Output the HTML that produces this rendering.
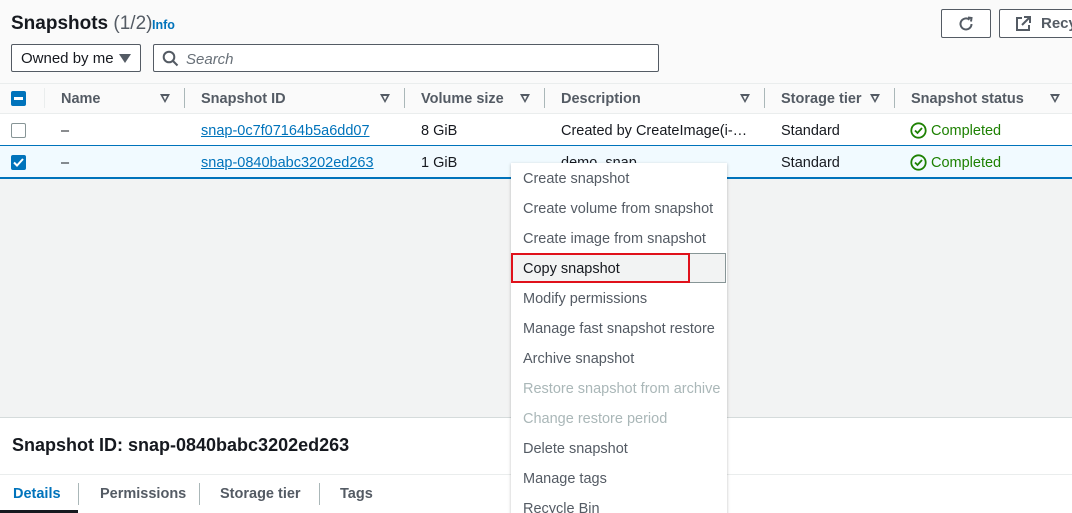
<!DOCTYPE html>
<html style="overflow:hidden;height:513px"><head><style>
*{box-sizing:border-box;margin:0;padding:0}
body{width:1072px;height:513px;overflow:hidden;background:#f2f3f3;font-family:"Liberation Sans",sans-serif;color:#16191f;position:relative;font-size:14.5px}
.abs{position:absolute}
.top{left:0;top:0;width:1072px;height:83px;background:#fafafa}
.thead{left:0;top:83px;width:1072px;height:31px;background:#fafafa;border-top:1px solid #eaeded;border-bottom:1px solid #eaeded}
.th{position:absolute;top:91px;font-weight:bold;color:#545b64;font-size:14.5px}
.tri{position:absolute;top:94px;width:0;height:0;border-left:5px solid transparent;border-right:5px solid transparent;border-top:9px solid #545b64}
.tri:after{content:"";position:absolute;left:-2px;top:-7px;border-left:2px solid transparent;border-right:2px solid transparent;border-top:4px solid #fafafa}
.sep{position:absolute;top:88px;width:1px;height:20px;background:#aab7b8}
.row{left:0;width:1072px;height:32px;background:#fff}
.td{position:absolute;font-size:14.5px}
a{color:#0073bb;text-decoration:underline}
.green{color:#1d8102}
.menu{left:511px;top:163px;width:216px;height:360px;background:#fff;box-shadow:0 1px 3px rgba(0,0,0,.25)}
.mi{position:absolute;left:12px;font-size:14.5px;color:#16191f;white-space:nowrap}
.dis{color:#aab7b8}
.btn{position:absolute;top:9px;height:29px;border:1px solid #545b64;background:#fff;border-radius:2px}
</style></head><body>
<div class="abs top"></div>
<div class="abs" style="left:11px;top:13px;font-size:19px;font-weight:bold">Snapshots <span style="font-weight:normal;color:#545b64">(1/2)</span></div>
<div class="abs" style="left:152px;top:18px;font-size:12.5px;font-weight:bold;color:#0073bb">Info</div>
<div class="btn" style="left:941px;width:50px"><svg class="abs" style="left:15px;top:5px" width="18" height="18" viewBox="0 0 18 18"><path d="M14.5 9a5.5 5.5 0 1 1-2-4.3" fill="none" stroke="#545b64" stroke-width="2"/><path d="M11 2.5l3.5 0.5-0.5 3.5" fill="none" stroke="#545b64" stroke-width="2"/></svg></div>
<div class="btn" style="left:999px;width:90px"><svg class="abs" style="left:15px;top:6px" width="16" height="16" viewBox="0 0 16 16"><path d="M7 2H2v12h12V9" fill="none" stroke="#545b64" stroke-width="2"/><path d="M9 1h6v6M15 1L7 9" fill="none" stroke="#545b64" stroke-width="2"/></svg><span class="abs" style="left:41px;top:5px;font-weight:bold;color:#545b64;font-size:15px">Recy</span></div>
<div class="abs" style="left:11px;top:44px;width:130px;height:28px;border:1px solid #545b64;background:#fff;border-radius:2px"><span class="abs" style="left:9px;top:5px;font-size:15px">Owned by me</span><span class="abs" style="left:107px;top:9px;border-left:6px solid transparent;border-right:6px solid transparent;border-top:9px solid #545b64"></span></div>
<div class="abs" style="left:153px;top:44px;width:506px;height:28px;border:1px solid #545b64;background:#fff;border-radius:2px"><svg class="abs" style="left:8px;top:5px" width="17" height="17" viewBox="0 0 17 17"><circle cx="7" cy="7" r="5.3" fill="none" stroke="#545b64" stroke-width="2"/><path d="M11 11l4.5 4.5" stroke="#545b64" stroke-width="2"/></svg><span class="abs" style="left:32px;top:6px;font-style:italic;color:#687078;font-size:15px">Search</span></div>
<div class="abs thead"></div>
<div class="abs" style="left:11px;top:91px;width:15px;height:15px;background:#0073bb;border-radius:2px"><div style="position:absolute;left:3px;top:6px;width:9px;height:2.5px;background:#fff"></div></div>
<div class="sep" style="left:44px;background:#eaeded"></div>
<div class="th" style="left:61px">Name</div><div class="tri" style="left:160px"></div><div class="sep" style="left:184px"></div>
<div class="th" style="left:201px">Snapshot ID</div><div class="tri" style="left:380px"></div><div class="sep" style="left:404px"></div>
<div class="th" style="left:421px">Volume size</div><div class="tri" style="left:520px"></div><div class="sep" style="left:544px"></div>
<div class="th" style="left:561px">Description</div><div class="tri" style="left:740px"></div><div class="sep" style="left:764px"></div>
<div class="th" style="left:781px">Storage tier</div><div class="tri" style="left:870px"></div><div class="sep" style="left:894px"></div>
<div class="th" style="left:911px">Snapshot status</div><div class="tri" style="left:1050px"></div>
<div class="abs row" style="top:114px;border-bottom:1px solid #0073bb"></div>
<div class="abs row" style="top:146px;background:#f1faff;height:33px;border-bottom:2px solid #0073bb"></div>
<div class="abs" style="left:11px;top:123px;width:15px;height:15px;border:1.5px solid #879596;border-radius:2px;background:#fff"></div>
<div class="td" style="left:61px;top:123px">–</div>
<div class="td" style="left:201px;top:123px"><a>snap-0c7f07164b5a6dd07</a></div>
<div class="td" style="left:421px;top:123px">8 GiB</div>
<div class="td" style="left:561px;top:123px">Created by CreateImage(i-…</div>
<div class="td" style="left:781px;top:123px">Standard</div>
<svg class="abs" style="left:910px;top:122px" width="17" height="17" viewBox="0 0 17 17"><circle cx="8.5" cy="8.5" r="7.2" fill="none" stroke="#1d8102" stroke-width="1.8"/><path d="M5 8.5l2.5 2.5 4.5-5" fill="none" stroke="#1d8102" stroke-width="1.8"/></svg>
<div class="td green" style="left:931px;top:123px">Completed</div>
<div class="abs" style="left:11px;top:155px;width:15px;height:15px;background:#0073bb;border-radius:2px"><svg width="15" height="15" viewBox="0 0 15 15"><path d="M3 7.5l3 3 6-6.5" fill="none" stroke="#fff" stroke-width="2"/></svg></div>
<div class="td" style="left:61px;top:155px">–</div>
<div class="td" style="left:201px;top:155px"><a>snap-0840babc3202ed263</a></div>
<div class="td" style="left:421px;top:155px">1 GiB</div>
<div class="td" style="left:561px;top:155px">demo_snap</div>
<div class="td" style="left:781px;top:155px">Standard</div>
<svg class="abs" style="left:910px;top:154px" width="17" height="17" viewBox="0 0 17 17"><circle cx="8.5" cy="8.5" r="7.2" fill="none" stroke="#1d8102" stroke-width="1.8"/><path d="M5 8.5l2.5 2.5 4.5-5" fill="none" stroke="#1d8102" stroke-width="1.8"/></svg>
<div class="td green" style="left:931px;top:155px">Completed</div>
<div class="abs" style="left:0;top:417px;width:1072px;height:96px;background:#fff;border-top:1px solid #d5dbdb"></div>
<div class="abs" style="left:12px;top:435px;font-size:18px;font-weight:bold">Snapshot ID: snap-0840babc3202ed263</div>
<div class="abs" style="left:0;top:474px;width:1072px;height:1px;background:#eaeded"></div>
<div class="abs" style="left:13px;top:486px;font-weight:bold;color:#0073bb">Details</div>
<div class="abs" style="left:0;top:510px;width:78px;height:3px;background:#16191f"></div>
<div class="abs" style="left:78px;top:483px;width:1px;height:22px;background:#aab7b8"></div>
<div class="abs" style="left:100px;top:486px;font-weight:bold;color:#545b64">Permissions</div>
<div class="abs" style="left:199px;top:483px;width:1px;height:22px;background:#aab7b8"></div>
<div class="abs" style="left:220px;top:486px;font-weight:bold;color:#545b64">Storage tier</div>
<div class="abs" style="left:319px;top:483px;width:1px;height:22px;background:#aab7b8"></div>
<div class="abs" style="left:340px;top:486px;font-weight:bold;color:#545b64">Tags</div>
<div class="abs menu">
<div class="abs" style="left:0;top:90px;width:215px;height:30px;background:#f2f3f3;border:1px solid #879596"></div>
<div class="abs" style="left:0;top:90px;width:179px;height:30px;border:2px solid #e0111b"></div>
<div class="mi" style="top:8px;color:#545b64">Create snapshot</div>
<div class="mi" style="top:38px;color:#545b64">Create volume from snapshot</div>
<div class="mi" style="top:68px;color:#545b64">Create image from snapshot</div>
<div class="mi" style="top:98px">Copy snapshot</div>
<div class="mi" style="top:128px;color:#545b64">Modify permissions</div>
<div class="mi" style="top:158px;color:#545b64">Manage fast snapshot restore</div>
<div class="mi" style="top:188px;color:#545b64">Archive snapshot</div>
<div class="mi dis" style="top:218px">Restore snapshot from archive</div>
<div class="mi dis" style="top:248px">Change restore period</div>
<div class="mi" style="top:278px;color:#545b64">Delete snapshot</div>
<div class="mi" style="top:308px;color:#545b64">Manage tags</div>
<div class="mi" style="top:338px;color:#545b64">Recycle Bin</div>
</div>
</body></html>
